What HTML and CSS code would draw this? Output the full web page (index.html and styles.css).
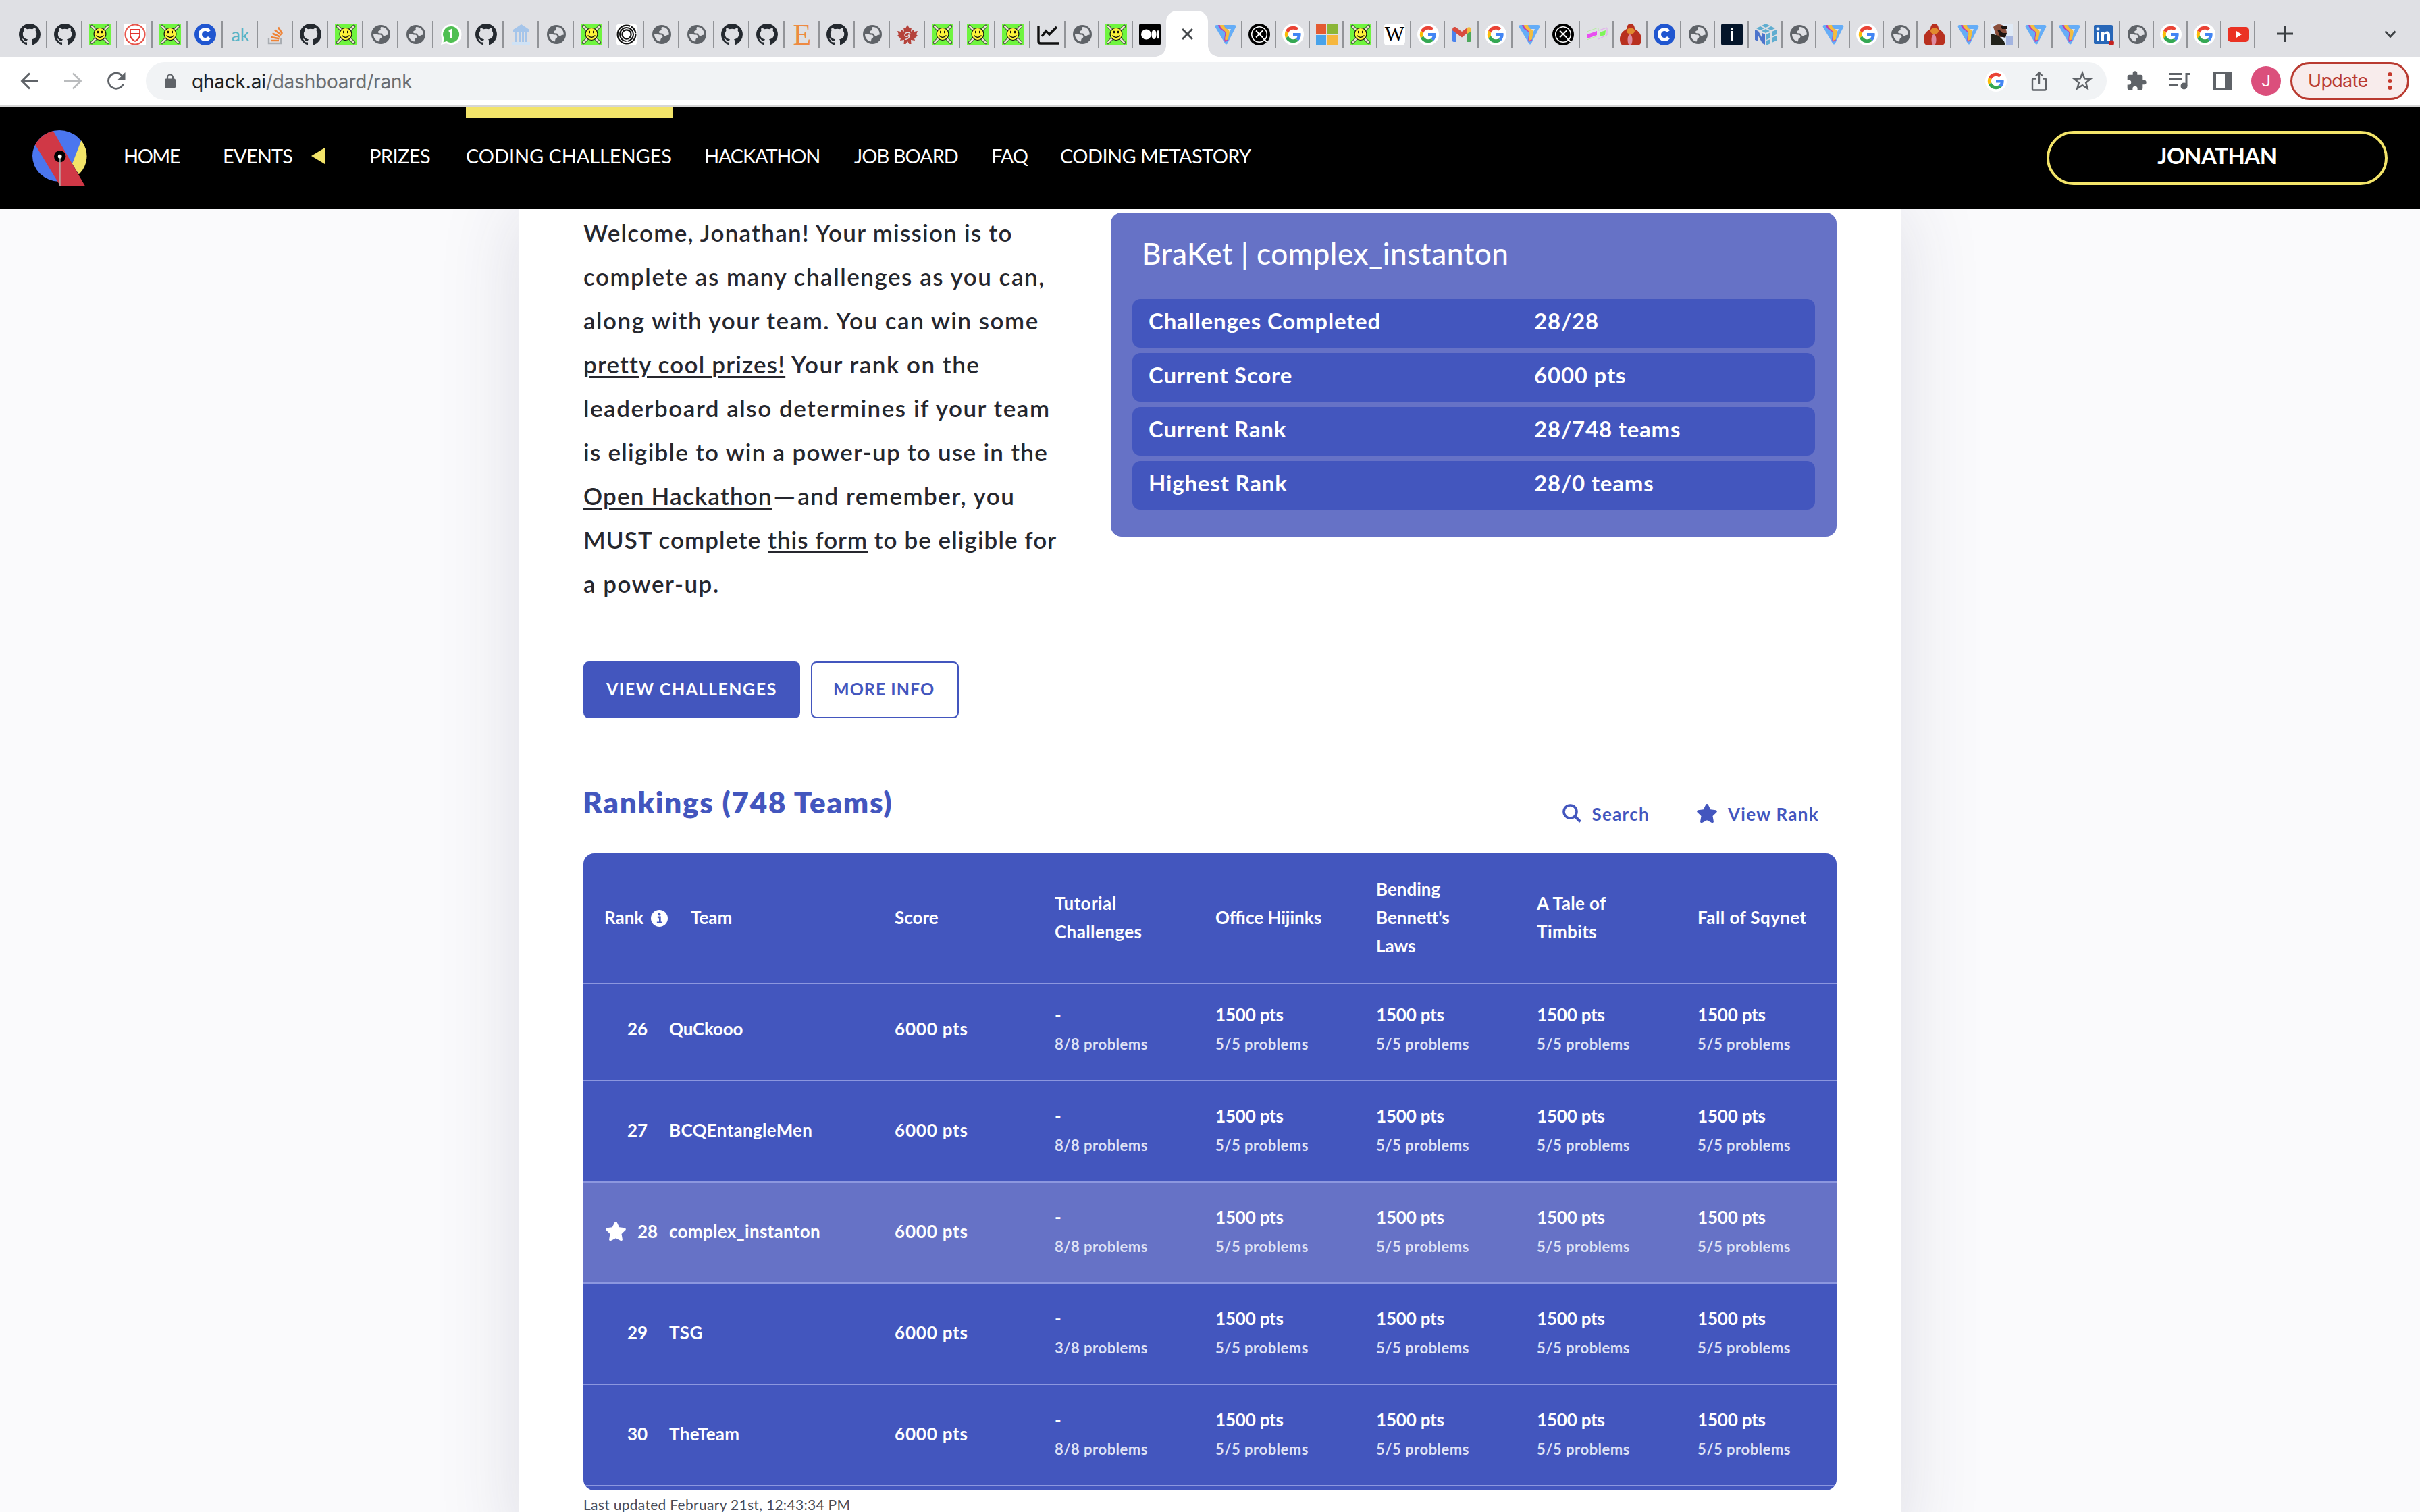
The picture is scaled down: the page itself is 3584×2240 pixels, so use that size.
FILE: index.html
```html
<!DOCTYPE html>
<html lang="en">
<head>
<meta charset="utf-8">
<title>QHack</title>
<link rel="stylesheet" href="styles.css">
</head>
<body>
<svg class="defs" aria-hidden="true">
  <symbol id="gh" viewBox="0 0 16 16"><path fill="#24292f" d="M8 0C3.58 0 0 3.58 0 8c0 3.54 2.29 6.53 5.47 7.59.4.07.55-.17.55-.38 0-.19-.01-.82-.01-1.49-2.01.37-2.53-.49-2.69-.94-.09-.23-.48-.94-.82-1.13-.28-.15-.68-.52-.01-.53.63-.01 1.08.58 1.23.82.72 1.21 1.87.87 2.33.66.07-.52.28-.87.51-1.07-1.78-.2-3.64-.89-3.64-3.95 0-.87.31-1.59.82-2.15-.08-.2-.36-1.02.08-2.12 0 0 .67-.21 2.2.82.64-.18 1.32-.27 2-.27s1.36.09 2 .27c1.53-1.04 2.2-.82 2.2-.82.44 1.1.16 1.92.08 2.12.51.56.82 1.27.82 2.15 0 3.07-1.87 3.75-3.65 3.95.29.25.54.73.54 1.48 0 1.07-.01 1.93-.01 2.2 0 .21.15.46.55.38A8.01 8.01 0 0 0 16 8c0-4.42-3.58-8-8-8z"/></symbol>
  <symbol id="smile" viewBox="0 0 32 32"><path fill="#6ff53f" d="M0 0h32v32H0z"/><path stroke="#333" stroke-width="4.500" stroke-linecap="round" d="M4 4l24 24M28 4L4 28"/><path stroke="#e9e6cf" stroke-width="2.600" stroke-linecap="round" d="M4 4l24 24M28 4L4 28"/><circle cx="16" cy="15.500" r="9" fill="#fdf23a" stroke="#111" stroke-width="1.200"/><ellipse cx="13" cy="12.500" rx="1.100" ry="2.100"/><ellipse cx="19" cy="12.500" rx="1.100" ry="2.100"/><path d="M10.500 17.500q5.500 6 11 0" fill="none" stroke="#111" stroke-width="1.300"/></symbol>
  <symbol id="shield" viewBox="0 0 32 32"><path fill="#fff" d="M0 0h32v32H0z"/><circle cx="16" cy="16" r="14.500" fill="none" stroke="#e8564c" stroke-width="2.200"/><path d="M9 9h14v9q-1 5-7 8-6-3-7-8zM9 15h14" fill="none" stroke="#e3342f" stroke-width="1.800"/></symbol>
  <symbol id="cc" viewBox="0 0 32 32"><circle cx="16" cy="16" r="16" fill="#2056d0"/><path d="M22 11.500a7.500 7.500 0 1 0 0 9" fill="none" stroke="#fff" stroke-width="5"/></symbol>
  <symbol id="so" viewBox="0 0 32 32"><path d="M6 21v8h18v-8" fill="none" stroke="#a9adb2" stroke-width="2.400"/><path d="M9 25h12M9.500 20l12 2.200M11.500 14.500l11 5M15 9.500l9.500 7.500M20 5.500l6 9.500" stroke="#ee8336" stroke-width="2.600"/></symbol>
  <symbol id="globe" viewBox="0 0 32 32"><circle cx="16" cy="16" r="14" fill="#5f6368"/><path d="M16.500 5C14 7 17 8.500 15 10c-2 1-3.500 1-3 3 .5 1.700 3 1.200 4.500 1.500 2.500.8 1.500 2.800 4 3.500 2 .3 3.500-1.500 6.300-1.600C27 9.500 22.500 5 16.500 5zM5 15.500c3-.5 7 1 10 1 2.500.5 3.500 3.500 1 5-2.500 1-1 3-2.500 5C8.500 25.500 5 21 5 15.500z" fill="#dfe0e4"/></symbol>
  <symbol id="wa" viewBox="0 0 32 32"><path fill="#fff" d="M16 1a15 15 0 0 0-13 22L1 31l8-2A15 15 0 1 0 16 1z"/><path fill="#4fbf52" d="M16 4A12 12 0 0 0 6 22.500L4.500 27.500l5-1.500A12 12 0 1 0 16 4z"/><path d="M13 12l3-2v12" fill="none" stroke="#fff" stroke-width="3"/></symbol>
  <symbol id="bank" viewBox="0 0 32 32"><path fill="#a5c5ea" d="M16 1l12 8v3H4V9zM7 13h3v14H7zM12 13h3v14h-3zM17 13h3v14h-3zM22 13h3v14h-3z"/><path fill="#cfe2f5" d="M3 27h26v4H3z"/></symbol>
  <symbol id="rings" viewBox="0 0 32 32"><rect width="32" height="32" rx="6" fill="#fff"/><g fill="none" stroke="#111"><circle cx="16" cy="16" r="13.400" stroke-width="2.200" stroke-dasharray="68 2 12 2"/><circle cx="16" cy="16" r="10" stroke-width="2" stroke-dasharray="14 2 46 1"/><circle cx="16" cy="16" r="6.600" stroke-width="2.200"/></g></symbol>
  <symbol id="maple" viewBox="0 0 32 32"><path fill="#b5433b" d="M16 2l3 5 3-1-1 6 4-3 1 3 5-1-2 5 2 2-5 4 1 3-6-1 .5 6h-3L16 26l-2.500 4h-3l.5-6-6 1 1-3-5-4 2-2-2-5 5 1 1-3 4 3-1-6 3 1z"/><path d="M20 15c-2-3-8-2-8 2 0 3 5 3 6 0 2 3-2 7-6 6" fill="none" stroke="#dfe0e4" stroke-width="1.500"/></symbol>
  <symbol id="chart" viewBox="0 0 32 32"><path d="M2 3v23q0 3 3 3h27" fill="none" stroke="#111" stroke-width="3.400"/><path d="M7 19l6-8 5 5L29 5" fill="none" stroke="#111" stroke-width="3.400"/></symbol>
  <symbol id="medium" viewBox="0 0 32 32"><rect width="32" height="32" rx="3"/><g fill="#fff"><circle cx="10.500" cy="16" r="7.500"/><ellipse cx="22" cy="16" rx="3.600" ry="7"/><ellipse cx="28" cy="16" rx="1.500" ry="6.500"/></g></symbol>
  <symbol id="vee" viewBox="0 0 32 32"><path fill="#65adf7" d="M3 2h26q3.500 0 2 3.500L19 29q-2 3-4 0L1 5.500Q-.5 2 3 2z"/><path fill="#dfe0e4" d="M19 8h5l-4 8z"/><path fill="#c03bb0" d="M5 2c2 8 8 8 10 11 1 4-2 9 0 14l5-2c-2-5 2-9 1-13L13 3z"/><path fill="#f3bd3e" d="M8 2c0 6 7 7 8 11 1 5-2 8 0 12l4-2c0-5 3-10 1-13-2-2-7-3-7-8z"/></symbol>
  <symbol id="xanadu" viewBox="0 0 32 32"><circle cx="16" cy="16" r="16"/><g fill="none" stroke="#fff" stroke-width="1.500"><circle cx="16" cy="16" r="11.300"/><path d="M11 10.500l10 10M21 10.500l-10 10M22 22l5 5" stroke-width="1.800"/></g></symbol>
  <symbol id="goog" viewBox="0 0 32 32"><circle cx="16" cy="16" r="16" fill="#fff"/><g transform="translate(3.800 3.800) scale(.508)"><path fill="#ea4335" d="M24 9.500c3.540 0 6.710 1.220 9.210 3.600l6.850-6.850C35.900 2.380 30.470 0 24 0 14.620 0 6.510 5.380 2.560 13.220l7.980 6.190C12.430 13.720 17.740 9.500 24 9.500z"/><path fill="#4285f4" d="M46.980 24.550c0-1.570-.15-3.090-.38-4.550H24v9.020h12.940c-.58 2.960-2.260 5.480-4.780 7.180l7.730 6c4.510-4.180 7.090-10.360 7.090-17.650z"/><path fill="#fbbc05" d="M10.530 28.590A14.500 14.500 0 0 1 9.770 24c0-1.600.27-3.140.76-4.590l-7.980-6.190A23.900 23.900 0 0 0 0 24c0 3.880.92 7.540 2.560 10.780z"/><path fill="#34a853" d="M24 48c6.480 0 11.930-2.130 15.890-5.810l-7.730-6c-2.150 1.450-4.920 2.300-8.160 2.300-6.260 0-11.570-4.220-13.470-9.910l-7.980 6.190C6.510 42.620 14.620 48 24 48z"/></g></symbol>
  <symbol id="ms" viewBox="0 0 32 32"><path fill="#e45b32" d="M0 0h15v15H0z"/><path fill="#8bb637" d="M17 0h15v15H17z"/><path fill="#49a3ea" d="M0 17h15v15H0z"/><path fill="#f6b73e" d="M17 17h15v15H17z"/></symbol>
  <symbol id="gmail" viewBox="0 0 32 32"><path fill="#4a83ee" d="M2 9l6 5v13H4q-2 0-2-2z"/><path fill="#4ea85b" d="M24 14l6-5v16q0 2-2 2h-4z"/><path fill="#d84b3e" d="M2 9c0-4 4-5 6-3l8 6 8-6v8l-8 6.500L2 10z"/><path fill="#f3b93b" d="M24 6c3-2 6 0 6 3v2l-6 4z"/></symbol>
  <symbol id="flags" viewBox="0 0 32 32"><path fill="#e84ff0" d="M2 16l14-5v6L2 22z"/><path fill="#7ff55a" d="M20 13l9-3-1 7-8 2z"/><path d="M1 12l17-6v5M18 18L1 24" fill="none" stroke="#b5f0a0"/><path d="M19 10l12-4v11l-13 6" fill="none" stroke="#e3a6ee"/></symbol>
  <symbol id="pear" viewBox="0 0 32 32"><path fill="#b8301f" d="M16 0c4 0 6 4 6 8 6 3 10 8 10 15 0 5-2 9-6 9H6c-4 0-6-4-6-9C0 16 4 11 10 8c0-4 2-8 6-8z"/><ellipse cx="16" cy="11" rx="6" ry="4.500" fill="#e08a2e"/><ellipse cx="15" cy="24" rx="3.500" ry="8" fill="#dd8ba0"/></symbol>
  <symbol id="info" viewBox="0 0 32 32"><rect width="32" height="32" rx="3" fill="#04152a"/><path d="M16 6v3M16 11v15" stroke="#fff" stroke-width="2.400"/></symbol>
  <symbol id="numpy" viewBox="0 0 32 32"><path fill="#5fadd0" d="M16 0l6 3-6 3-6-3zM8 4l6 3-6 3-6-3zM24 4l6 3-6 3-6-3zM16 8l6 3-6 3-6-3zM17 16l6-3v8l-6 3zM25 12l7-3v7l-7 3zM17 25l6-2v6l-6 3zM25 21l7-3v7l-7 3z"/><path fill="#4d74cc" d="M0 9l5 2 6 11v-8l4 2v15l-4-2-6-11v8l-5-2z"/></symbol>
  <symbol id="face" viewBox="0 0 32 32"><path fill="#dfe9f5" d="M0 0h32v32H0z"/><path fill="#a3b4e0" d="M22 19h10v13H22z"/><path fill="#8a4f3c" d="M3 5q6-6 13-3l5 3 2 8-3 7H8z"/><path fill="#1d1512" d="M14 4h9v4h-7zM9 9l3 0 5 5 6 0-2 7-8-2z"/><path fill="#22221b" d="M0 15l11 3 8 8 2 6H0z"/></symbol>
  <symbol id="li" viewBox="0 0 32 32"><rect x="2" y="2" width="28" height="28" rx="2" fill="#2867b8"/><path fill="#fff" d="M6 12h4v14H6zM13 12h4v2c3-4 9-3 9 3v9h-4v-8c0-4-5-4-5 0v8h-4z"/><circle cx="8" cy="8" r="2.400" fill="#fff"/><circle cx="28" cy="28.500" r="4" fill="#c5221f"/></symbol>
  <symbol id="yt" viewBox="0 0 32 32"><rect y="5" width="32" height="22" rx="5" fill="#ea3223"/><path fill="#fff" d="M13 11l8 5-8 5z"/></symbol>
  <symbol id="star" viewBox="0 0 30 28"><path fill="currentColor" d="M15 0c.8 0 1.400.4 1.700 1.100l3.500 7.100 7.900 1.100c1.700.3 2.300 2.100 1.100 3.300l-5.700 5.500 1.400 7.800c.2 1.700-1.400 2.700-2.800 2L15 24.200 7.900 27.900c-1.400.7-3-.3-2.800-2l1.400-7.800L.8 12.600C-.4 11.400.2 9.600 1.900 9.300l7.900-1.100 3.500-7.100C13.600.4 14.200 0 15 0z"/></symbol>
</svg>

<div class="tabstrip">
  <div class="tabs wide">
    <i><svg><use href="#gh"/></svg></i><i><svg><use href="#gh"/></svg></i><i><svg><use href="#smile"/></svg></i><i><svg><use href="#shield"/></svg></i><i><svg><use href="#smile"/></svg></i><i><svg><use href="#cc"/></svg></i><i><span class="fav ak">ak</span></i><i><svg><use href="#so"/></svg></i><i><svg><use href="#gh"/></svg></i><i><svg><use href="#smile"/></svg></i>
    <i><svg><use href="#globe"/></svg></i><i><svg><use href="#globe"/></svg></i><i><svg><use href="#wa"/></svg></i><i><svg><use href="#gh"/></svg></i><i><svg><use href="#bank"/></svg></i><i><svg><use href="#globe"/></svg></i><i><svg><use href="#smile"/></svg></i><i><svg><use href="#rings"/></svg></i><i><svg><use href="#globe"/></svg></i><i><svg><use href="#globe"/></svg></i>
    <i><svg><use href="#gh"/></svg></i><i><svg><use href="#gh"/></svg></i><i><span class="fav etsy">E</span></i><i><svg><use href="#gh"/></svg></i><i><svg><use href="#globe"/></svg></i><i><svg><use href="#maple"/></svg></i><i><svg><use href="#smile"/></svg></i><i><svg><use href="#smile"/></svg></i><i><svg><use href="#smile"/></svg></i><i><svg><use href="#chart"/></svg></i>
  </div>
  <div class="tabs before">
    <i><svg><use href="#globe"/></svg></i><i><svg><use href="#smile"/></svg></i><i><svg><use href="#medium"/></svg></i>
  </div>
  <div class="active-tab"><svg viewBox="0 0 16 16"><path d="M1 1l14 14M15 1L1 15" stroke="#45494d" stroke-width="2.600"/></svg></div>
  <div class="tabs">
    <i><svg><use href="#vee"/></svg></i><i><svg><use href="#xanadu"/></svg></i><i><svg><use href="#goog"/></svg></i><i><svg><use href="#ms"/></svg></i><i><svg><use href="#smile"/></svg></i><i><span class="fav wiki">W</span></i><i><svg><use href="#goog"/></svg></i><i><svg><use href="#gmail"/></svg></i><i><svg><use href="#goog"/></svg></i><i><svg><use href="#vee"/></svg></i>
    <i><svg><use href="#xanadu"/></svg></i><i><svg><use href="#flags"/></svg></i><i><svg><use href="#pear"/></svg></i><i><svg><use href="#cc"/></svg></i><i><svg><use href="#globe"/></svg></i><i><svg><use href="#info"/></svg></i><i><svg><use href="#numpy"/></svg></i><i><svg><use href="#globe"/></svg></i><i><svg><use href="#vee"/></svg></i><i><svg><use href="#goog"/></svg></i>
    <i><svg><use href="#globe"/></svg></i><i><svg><use href="#pear"/></svg></i><i><svg><use href="#vee"/></svg></i><i><svg><use href="#face"/></svg></i><i><svg><use href="#vee"/></svg></i><i><svg><use href="#vee"/></svg></i><i><svg><use href="#li"/></svg></i><i><svg><use href="#globe"/></svg></i><i><svg><use href="#goog"/></svg></i><i><svg><use href="#goog"/></svg></i><i><svg><use href="#yt"/></svg></i>
  </div>
  <svg class="plus" viewBox="0 0 24 24"><path d="M12 0v24M0 12h24" stroke="#3c4043" stroke-width="3.200"/></svg>
  <svg class="caret" viewBox="0 0 18 12"><path d="M1.500 1.500L9 9.500l7.500-8" fill="none" stroke="#3c4043" stroke-width="2.800"/></svg>
</div>

<div class="toolbar">
  <svg class="nav-btn" viewBox="0 0 28 28"><path d="M27 14H3M14 2.500L2.500 14 14 25.500" fill="none" stroke="#5f6368" stroke-width="2.800"/></svg>
  <svg class="nav-btn" viewBox="0 0 28 28"><path d="M1 14h24M14 2.500L25.500 14 14 25.500" fill="none" stroke="#babcbe" stroke-width="2.800"/></svg>
  <svg class="nav-btn" viewBox="0 0 28 28"><path d="M24.500 18.500a11.500 11.500 0 1 1-1.800-12.300" fill="none" stroke="#5f6368" stroke-width="2.800"/><path fill="#5f6368" d="M27.500 1v11h-11z"/></svg>
  <div class="omnibox">
    <svg class="lock" viewBox="0 0 16 22"><path d="M4 9V5.500a4 4 0 0 1 8 0V9" fill="none" stroke="#5f6368" stroke-width="2.200"/><rect y="7.500" width="16" height="14" rx="2" fill="#5f6368"/></svg>
    <span class="url"><b>qhack.ai</b>/dashboard/rank</span>
    <svg class="o-ico" viewBox="0 0 32 32"><use href="#goog"/></svg>
    <svg class="o-ico" viewBox="0 0 32 32"><path d="M11 12.500H7.500q-1.500 0-1.500 1.500v14q0 1.500 1.500 1.500h17q1.500 0 1.500-1.500V14q0-1.500-1.500-1.500H21M16 21V4M11 8.500l5-5 5 5" fill="none" stroke="#5f6368" stroke-width="2.400"/></svg>
    <svg class="o-ico" viewBox="0 0 32 32"><path d="M16 4l3.200 8.400 9 .5-7 5.600 2.400 8.700-7.600-5-7.600 5 2.400-8.700-7-5.600 9-.5z" fill="none" stroke="#5f6368" stroke-width="2.500"/></svg>
  </div>
  <svg class="t-ico" viewBox="0 0 24 24"><path fill="#5f6368" d="M20.500 11H19V7c0-1.100-.9-2-2-2h-4V3.500a2.500 2.500 0 0 0-5 0V5H4c-1.100 0-1.990.9-1.990 2v3.800H3.500a2.700 2.700 0 0 1 0 5.400H2V20c0 1.100.9 2 2 2h3.800v-1.500a2.700 2.700 0 0 1 5.400 0V22H17c1.100 0 2-.9 2-2v-4h1.500a2.500 2.500 0 0 0 0-5z"/></svg>
  <svg class="t-ico" viewBox="0 0 32 32"><path d="M0 5.500h20M0 13.500h20M0 21.500h13M26 24V5.500h6" fill="none" stroke="#5f6368" stroke-width="3"/><circle cx="22.500" cy="23.500" r="5" fill="#5f6368"/></svg>
  <svg class="t-ico" viewBox="0 0 32 32"><path fill="#5f6368" fill-rule="evenodd" d="M2 2h28v28H2zM6 6v20h13V6z"/></svg>
  <div class="avatar">J</div>
  <div class="update">Update<svg viewBox="0 0 6 28"><g fill="#c5392c"><circle cx="3" cy="4" r="3"/><circle cx="3" cy="14" r="3"/><circle cx="3" cy="24" r="3"/></g></svg></div>
</div>

<nav class="nav">
  <svg class="logo" viewBox="0 0 100 100"><ellipse cx="48" cy="51" rx="40" ry="38" fill="#4b76ef"/><path fill="#000" d="M67 62.700L76.700 78.300 86 100H60z"/><path fill="#f3e469" d="M80.300 28.300A40 38 0 0 1 76.700 78.300L67 62.700z"/><path fill="#d03846" d="M38.700 14L85.700 95H49L12 34.300Q21 18.500 38.700 14z"/><circle cx="48.700" cy="51.700" r="8.700"/><path d="M48.900 52v43" stroke="#b9b9b9" stroke-width="1.400"/><circle cx="48.700" cy="51.700" r="2.900" fill="#fff"/></svg>
  <a class="n-home">HOME</a>
  <a class="n-events">EVENTS<svg viewBox="0 0 20 24"><path d="M20 0v24L0 12z" fill="#f3e469"/></svg></a>
  <a class="n-prizes">PRIZES</a>
  <a class="n-coding">CODING CHALLENGES</a>
  <a class="n-hack">HACKATHON</a>
  <a class="n-jobs">JOB BOARD</a>
  <a class="n-faq">FAQ</a>
  <a class="n-meta">CODING METASTORY</a>
  <a class="user">JONATHAN</a>
</nav>

<main class="page">
  <div class="sheet">
    <section class="intro">
      <p class="welcome"><span class="snug">Welcome, Jonathan! Your mission is to</span><br>complete as many challenges as you can,<br>along with your team. You can win some<br><u>pretty cool prizes!</u> Your rank on the<br>leaderboard also determines if your team<br><span class="snug">is eligible to win a power-up to use in the</span><br><u>Open Hackathon</u><span class="dash">—</span>and remember, you<br><span class="tight">MUST complete <u>this form</u> to be eligible for</span><br>a power-up.</p>
      <div class="card">
        <h2>BraKet | complex_instanton</h2>
        <div class="stat"><span>Challenges Completed</span><span>28/28</span></div>
        <div class="stat"><span>Current Score</span><span>6000 pts</span></div>
        <div class="stat"><span>Current Rank</span><span>28/748 teams</span></div>
        <div class="stat"><span>Highest Rank</span><span>28/0 teams</span></div>
      </div>
    </section>
    <div class="actions"><a class="btn primary">VIEW CHALLENGES</a><a class="btn">MORE INFO</a></div>
    <div class="rank-head">
      <h1>Rankings (748 Teams)</h1>
      <a class="link"><svg class="mag" viewBox="0 0 28 28"><circle cx="11.500" cy="11.500" r="9.500" fill="none" stroke="currentColor" stroke-width="3.600"/><path d="M18.500 18.500l8 8" stroke="currentColor" stroke-width="4"/></svg>Search</a>
      <a class="link"><svg class="star"><use href="#star"/></svg>View Rank</a>
    </div>
    <div class="table">
      <div class="row head">
        <div class="rank-h">Rank<svg viewBox="0 0 24 24"><circle cx="12" cy="12" r="12" fill="#fff"/><path d="M9.500 10.500h3.300v7M8.500 18h7" fill="none" stroke="#4356be" stroke-width="2.600"/><circle cx="12" cy="6.300" r="1.900" fill="#4356be"/></svg></div>
        <div class="team-h">Team</div><div>Score</div><div class="tut">Tutorial<br>Challenges</div><div>Office Hijinks</div><div>Bending<br>Bennett's<br>Laws</div><div class="fall">A Tale of<br>Timbits</div><div class="fall">Fall of Sqynet</div>
      </div>
      <div class="rows">
        <div class="row"><div class="num">26</div><div class="team qu">QuCkooo</div><div class="score">6000 pts</div><div class="cell">-<small>8/8 problems</small></div><div class="cell">1500 pts<small>5/5 problems</small></div><div class="cell">1500 pts<small>5/5 problems</small></div><div class="cell">1500 pts<small>5/5 problems</small></div><div class="cell">1500 pts<small>5/5 problems</small></div></div>
        <div class="row"><div class="num">27</div><div class="team">BCQEntangleMen</div><div class="score">6000 pts</div><div class="cell">-<small>8/8 problems</small></div><div class="cell">1500 pts<small>5/5 problems</small></div><div class="cell">1500 pts<small>5/5 problems</small></div><div class="cell">1500 pts<small>5/5 problems</small></div><div class="cell">1500 pts<small>5/5 problems</small></div></div>
        <div class="row mine"><div class="num"><svg class="star"><use href="#star"/></svg>28</div><div class="team">complex_instanton</div><div class="score">6000 pts</div><div class="cell">-<small>8/8 problems</small></div><div class="cell">1500 pts<small>5/5 problems</small></div><div class="cell">1500 pts<small>5/5 problems</small></div><div class="cell">1500 pts<small>5/5 problems</small></div><div class="cell">1500 pts<small>5/5 problems</small></div></div>
        <div class="row"><div class="num">29</div><div class="team">TSG</div><div class="score">6000 pts</div><div class="cell">-<small>3/8 problems</small></div><div class="cell">1500 pts<small>5/5 problems</small></div><div class="cell">1500 pts<small>5/5 problems</small></div><div class="cell">1500 pts<small>5/5 problems</small></div><div class="cell">1500 pts<small>5/5 problems</small></div></div>
        <div class="row"><div class="num">30</div><div class="team">TheTeam</div><div class="score">6000 pts</div><div class="cell">-<small>8/8 problems</small></div><div class="cell">1500 pts<small>5/5 problems</small></div><div class="cell">1500 pts<small>5/5 problems</small></div><div class="cell">1500 pts<small>5/5 problems</small></div><div class="cell">1500 pts<small>5/5 problems</small></div></div>
      </div>
    </div>
    <div class="updated">Last updated February 21st, 12:43:34 PM</div>
  </div>
</main>
</body>
</html>
```
FILE: styles.css
```css
* { box-sizing: border-box; margin: 0; padding: 0; }
body { width: 3584px; height: 2240px; overflow: hidden; display: flex; flex-direction: column; background: #fafafc; font-family: Lato, sans-serif; color: #26272e; white-space: nowrap; }
svg { display: block; flex: none; }
.defs { position: absolute; width: 0; height: 0; }

/* browser tabs */
.tabstrip { height: 84px; flex: none; display: flex; background: #dfe0e4; padding: 16px 0 0 18px; }
.tabs { display: flex; height: 68px; padding: 15px 0 13px; }
.tabs i { width: 50px; height: 40px; border-right: 2px solid #929498; display: flex; align-items: center; justify-content: center; padding-left: 2px; font-style: normal; }
.wide i { width: 52px; }
.tabs svg { width: 32px; height: 32px; }
.fav { width: 32px; height: 32px; text-align: center; }
.ak { font-size: 27px; line-height: 31px; color: #58b3c4; }
.etsy { font: 44px/34px "Liberation Serif", serif; color: #ee8a42; }
.wiki { border-radius: 6px; background: #fff; font: 31px/32px "Liberation Serif", serif; letter-spacing: -1px; color: #000; }
.before i:last-child { border-right-color: transparent; }
.active-tab { left: -1px; width: 62px; height: 68px; flex: none; background: #fff; border-radius: 16px 16px 0 0; display: flex; align-items: center; justify-content: center; position: relative; }
.active-tab svg { width: 17px; height: 17px; }
.active-tab::before, .active-tab::after { content: ""; position: absolute; bottom: 0; width: 16px; height: 16px; }
.active-tab::before { left: -16px; background: radial-gradient(circle at 0 0, transparent 15.5px, #fff 16px); }
.active-tab::after { right: -16px; background: radial-gradient(circle at 100% 0, transparent 15.5px, #fff 16px); }
.plus { width: 24px; height: 24px; margin: 22px 0 0 32px; }
.caret { width: 18px; height: 12px; margin: 29px 0 0 135px; }

/* address bar */
.toolbar { height: 74px; flex: none; display: flex; align-items: center; background: #fff; border-bottom: 2px solid #d6d6d6; padding: 0 16px 0 30px; }
.nav-btn { width: 28px; height: 28px; margin-right: 36px; }
.nav-btn:nth-child(3) { margin-right: 30px; }
.omnibox { width: 2904px; height: 56px; border-radius: 28px; background: #f1f3f5; display: flex; align-items: center; padding: 0 20px 0 28px; }
.lock { width: 16px; height: 22px; }
.url { font: 400 28px/56px Inter, sans-serif; letter-spacing: -.2px; margin-left: 24px; padding-top: 1px; color: #6a6d71; flex: 1; }
.url b { font-weight: 400; color: #202124; }
.o-ico { width: 32px; height: 32px; margin-left: 32px; }
.t-ico { width: 32px; height: 32px; margin-left: 28px; }
.t-ico + .t-ico { margin-left: 32px; }
.avatar { width: 44px; height: 44px; margin-left: 26px; border-radius: 50%; background: #db4f7c; color: #fff; font: 400 24px/44px Roboto, sans-serif; text-align: center; }
.update { width: 176px; height: 56px; margin-left: 14px; border: 3px solid #b93a30; border-radius: 28px; background: #f8ecec; color: #b93a30; font: 400 27px/52px Inter, sans-serif; letter-spacing: -.7px; display: flex; align-items: center; justify-content: space-between; padding: 0 22px 0 23px; }
.update svg { width: 7px; height: 28px; }

/* site navigation */
.nav { height: 152px; flex: none; background: #000; display: flex; align-items: center; padding: 0 48px 0 40px; color: #fff; font-size: 29px; line-height: 60px; }
.logo { width: 100px; height: 100px; margin: -8px 43px 0 0; }
.nav a { display: flex; align-items: center; height: 60px; margin-bottom: 7px; letter-spacing: -1px; flex: none; }
.nav .n-home { width: 147px; letter-spacing: -1.500px; }
.nav .n-events { width: 217px; letter-spacing: -.8px; }
.n-events svg { width: 20px; height: 24px; margin: 0 0 0 28px; }
.nav .n-prizes { width: 143px; letter-spacing: -.6px; }
.nav .n-coding { width: 306px; height: 152px; margin: 0 47px 0 0; padding-bottom: 24px; border-top: 17px solid #f3e469; letter-spacing: -.1px; }
.nav .n-hack { width: 222px; letter-spacing: -1.200px; }
.nav .n-jobs { width: 203px; letter-spacing: -1px; }
.nav .n-faq { width: 102px; }
.nav .n-meta { letter-spacing: -.6px; }
.nav .user { width: 505px; height: 80px; margin: 0 0 0 auto; border: 4px solid #f3e469; border-radius: 40px; justify-content: center; padding-bottom: 9px; font-size: 33px; font-weight: 700; letter-spacing: -.5px; }

/* content */
.page { height: 1930px; overflow: hidden; display: flex; justify-content: center; }
.sheet { width: 2048px; height: 1990px; background: #fff; padding: 0 96px; box-shadow: 0 0 110px rgba(50, 50, 90, .145); }
.intro { display: flex; align-items: flex-start; height: 670px; }
.welcome { width: 781px; padding-top: 2px; font-size: 35px; line-height: 65px; font-weight: 600; letter-spacing: 1.520px; }
.welcome .snug { letter-spacing: 1.270px; }
.welcome .tight { letter-spacing: 1.050px; }
.welcome u { text-decoration-thickness: 3px; text-underline-offset: 4px; letter-spacing: 1.200px; }
.welcome .tight u { letter-spacing: 1px; }
.dash { display: inline-block; transform: scaleX(1.2); margin: 0 4px; }
.card { width: 1075px; height: 480px; margin-top: 5px; padding: 29px 32px; border-radius: 16px; background: #6672c6; color: #fff; }
.card h2 { height: 99px; padding-left: 14px; font-size: 44px; line-height: 62px; font-weight: 500; letter-spacing: .5px; }
.stat { height: 72px; margin-bottom: 8px; padding: 0 24px; border-radius: 12px; background: #4356be; display: grid; grid-template-columns: 571px 1fr; font-size: 33px; line-height: 64px; font-weight: 700; letter-spacing: .8px; }
.actions { display: flex; gap: 16px; }
.btn { width: 219px; height: 84px; padding: 0 31px; border: 2px solid #4356be; border-radius: 8px; color: #4356be; font-size: 25px; line-height: 76px; font-weight: 700; letter-spacing: 1px; }
.primary { width: 321px; padding: 0 32px; background: #4356be; color: #fff; letter-spacing: 1.500px; }
.rank-head { height: 200px; display: flex; color: #4356be; }
.rank-head h1 { flex: 1; margin-left: -1px; padding-top: 94px; font-size: 44px; line-height: 60px; font-weight: 800; letter-spacing: 1.700px; }
.link { display: flex; align-items: center; height: 40px; margin-top: 122px; margin-right: 26px; font-size: 26px; font-weight: 700; letter-spacing: 1.300px; }
.link + .link { margin-left: 44px; }
.mag { width: 28px; height: 28px; margin: -2px 15px 0 0; }
.star { width: 30px; height: 28px; }
.link .star { margin: -2px 16px 0 0; }

.table { height: 944px; border-radius: 16px; overflow: hidden; background: #4356be; color: #fff; font-size: 26px; line-height: 42px; font-weight: 700; }
.row { display: grid; grid-template-columns: 127px 334px 237px 238px 238px 238px 238px 206px; align-items: center; height: 150px; padding-bottom: 4px; border-bottom: 2px solid #8c97df; }
.head { height: 194px; padding-bottom: 3px; }
.rank-h { display: flex; align-items: center; padding-left: 31px; }
.rank-h svg { width: 25px; height: 25px; margin: 4px 0 0 11px; }
.team-h { padding-left: 32px; }
.tut { letter-spacing: .4px; }
.fall { letter-spacing: .4px; }
.rows { height: 750px; overflow: hidden; }
.rows .row:first-child { margin-top: -6px; }
.mine { background: #6672c6; }
.num { padding-left: 65px; }
.mine .num { display: flex; align-items: center; padding-left: 33px; gap: 17px; }
.team { letter-spacing: .3px; }
.qu { letter-spacing: -.2px; }
.score { letter-spacing: .8px; }
.cell { padding-top: 3px; letter-spacing: -.2px; }
.cell small { display: block; font-size: 22px; line-height: 45px; font-weight: 700; letter-spacing: .5px; color: #dfe2f5; }
.updated { padding-top: 6px; font-size: 21px; line-height: 30px; letter-spacing: .3px; color: #4a4b55; }
```
